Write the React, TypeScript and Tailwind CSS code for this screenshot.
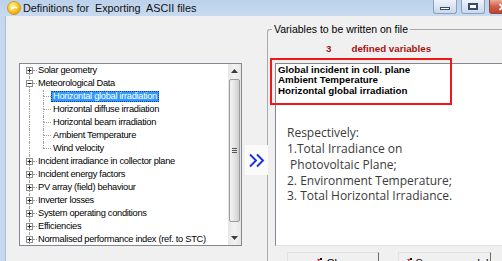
const LINE = "border-dotted border-[#a0a0a0]";
const TREE_FONT = "font-['Liberation_Sans',sans-serif] tracking-[-0.3px]";

type Row = { label: string; kind: "plus" | "minus" | "leaf"; selected?: boolean; lastChild?: boolean };

const rows: Row[] = [
  { label: "Solar geometry", kind: "plus" },
  { label: "Meteorological Data", kind: "minus" },
  { label: "Horizontal global irradiation", kind: "leaf", selected: true },
  { label: "Horizontal diffuse irradiation", kind: "leaf" },
  { label: "Horizontal beam irradiation", kind: "leaf" },
  { label: "Ambient Temperature", kind: "leaf" },
  { label: "Wind velocity", kind: "leaf", lastChild: true },
  { label: "Incident irradiance in collector plane", kind: "plus" },
  { label: "Incident energy factors", kind: "plus" },
  { label: "PV array (field) behaviour", kind: "plus" },
  { label: "Inverter losses", kind: "plus" },
  { label: "System operating conditions", kind: "plus" },
  { label: "Efficiencies", kind: "plus" },
  { label: "Normalised performance index (ref. to STC)", kind: "plus" },
];

const chosen = ["Global incident in coll. plane", "Ambient Temperature", "Horizontal global irradiation"];

const note = ["Respectively:", "1.Total Irradiance on", " Photovoltaic Plane;", "2. Environment Temperature;", "3. Total Horizontal Irradiance."];

function Expander({ open }: { open: boolean }) {
  return (
    <svg width="7" height="7" viewBox="0 0 7 7" className="block shrink-0">
      <rect x="0.5" y="0.5" width="6" height="6" fill="#fff" stroke="#8e8f8f" />
      <path d="M1.5 3.5h4" stroke="#222" />
      {!open && <path d="M3.5 1.5v4" stroke="#222" />}
    </svg>
  );
}

function TreeRow({ row, first }: { row: Row; first: boolean }) {
  const leaf = row.kind === "leaf";
  return (
    <div className="flex h-[13px] items-stretch">
      <div className="grid w-[18px] shrink-0">
        <div className="col-start-1 row-start-1 flex flex-col">
          <div className={`ml-[9px] h-[6px] ${first ? "" : `border-l ${LINE}`}`} />
          <div className={`ml-[9px] flex-1 border-l ${LINE}`} />
        </div>
        {!leaf && (
          <div className="col-start-1 row-start-1 flex items-center">
            <span className="ml-[6px]">
              <Expander open={row.kind === "minus"} />
            </span>
            <span className={`w-[4px] border-t ${LINE}`} />
          </div>
        )}
      </div>
      {leaf && (
        <div className="grid w-[13px] shrink-0">
          <div className="col-start-1 row-start-1 flex flex-col">
            <div className={`ml-[5px] h-[6px] border-l ${LINE}`} />
            <div className={`ml-[5px] flex-1 ${row.lastChild ? "" : `border-l ${LINE}`}`} />
          </div>
          <div className="col-start-1 row-start-1 flex items-center">
            <span className={`ml-[5px] w-[8px] border-t ${LINE}`} />
          </div>
        </div>
      )}
      <span
        className={`self-center whitespace-nowrap text-[9.3px] leading-[11px] ${
          leaf ? "px-[2px]" : ""
        } ${row.selected ? "bg-[#3399ff] text-white outline outline-dotted outline-[#0f3f8c] -outline-offset-1" : "text-black"}`}
      >
        {row.label}
      </span>
    </div>
  );
}

function Arrow({ up }: { up?: boolean }) {
  return (
    <svg width="7" height="4" viewBox="0 0 7 4" className="block">
      <path d={up ? "M0 4h7L3.5 0z" : "M0 0h7L3.5 4z"} fill="#3c3c3c" />
    </svg>
  );
}

function ScrollBar() {
  return (
    <div className="flex w-[13px] shrink-0 flex-col bg-linear-to-r from-[#e6e6e6] via-[#f2f2f2] to-[#e6e6e6]">
      <div className="flex h-[14px] shrink-0 items-center justify-center">
        <Arrow up />
      </div>
      <div className="mx-[1px] mt-[1px] flex h-[143px] shrink-0 flex-col items-center justify-center gap-[1px] rounded-[2px] border border-[#9b9b9b] bg-linear-to-r from-[#f4f4f4] via-[#e4e4e4] to-[#cfcfcf]">
        <span className="h-px w-[5px] bg-[#555]" />
        <span className="h-px w-[5px] bg-[#555]" />
        <span className="h-px w-[5px] bg-[#555]" />
      </div>
      <div className="flex-1" />
      <div className="flex h-[14px] shrink-0 items-center justify-center">
        <Arrow />
      </div>
    </div>
  );
}

function AppIcon() {
  return (
    <svg width="14" height="14" viewBox="0 0 14 14" className="block">
      <defs>
        <radialGradient id="sun" cx="0.4" cy="0.35" r="0.7">
          <stop offset="0" stopColor="#fff3a6" />
          <stop offset="0.6" stopColor="#f7c623" />
          <stop offset="1" stopColor="#e49a0c" />
        </radialGradient>
      </defs>
      <circle cx="7" cy="7" r="6.5" fill="url(#sun)" stroke="#d48a10" strokeWidth="0.8" />
      <path d="M4 8.5c1-2.5 4-3 6-1.5M5 6l1.5 2" stroke="#fff" strokeWidth="1.1" fill="none" />
    </svg>
  );
}

function CapButton({ kind }: { kind: "min" | "max" | "close" }) {
  if (kind === "close") {
    return (
      <div className="-mr-[14px] flex h-[14px] w-[27px] shrink-0 items-center justify-center rounded-b-[3px] border border-t-0 border-[#8d4a42] bg-linear-to-b from-[#e9a99a] via-[#d25c4a] to-[#c2402d]">
        <svg width="9" height="8" viewBox="0 0 9 8" className="block">
          <path d="M1.5 1l6 6M7.5 1l-6 6" stroke="#fff" strokeWidth="1.8" />
        </svg>
      </div>
    );
  }
  return (
    <div className="flex h-[14px] w-[24px] shrink-0 items-center justify-center rounded-b-[3px] border border-t-0 border-[#8ba0bb] bg-linear-to-b from-[#eef3fa] to-[#c9d8ea]">
      {kind === "min" ? (
        <span className="mt-[3px] h-[3px] w-[10px] border border-[#3a4c6b] bg-white" />
      ) : (
        <span className="h-[7px] w-[10px] border border-[#3a4c6b] bg-white shadow-[inset_0_0_0_1px_#3a4c6b]" />
      )}
    </div>
  );
}

function ButtonIcon() {
  return (
    <svg width="12" height="12" viewBox="0 0 12 12" className="mt-[2px] block shrink-0">
      <path d="M1 4h6v7H1z" fill="#2c4fd6" />
      <path d="M6 1l3 0-1 3z" fill="#e0262a" />
      <rect x="9" y="0" width="2" height="2" fill="#111" />
    </svg>
  );
}

function WinButton({ label, w }: { label: string; w: string }) {
  return (
    <div
      className={`${w} flex h-[24px] shrink-0 justify-center gap-[3px] border-l border-t border-r border-l-[#e2e2e2] border-t-[#e2e2e2] border-r-[#6a6a6a] bg-[#f0f0f0] pt-[3px]`}
    >
      <ButtonIcon />
      <span className="mt-[1px] text-[11px] leading-[13px] text-black">{label}</span>
    </div>
  );
}

export default function App() {
  return (
    <div className="relative h-[261px] w-[502px] overflow-hidden bg-[#f0f0f0] font-['Liberation_Sans',sans-serif]">
      {/* title bar */}
      <div className="flex h-[16px] items-center bg-linear-to-b from-[#bcd1ea] to-[#c7daf0]">
        <span className="ml-[7px]">
          <AppIcon />
        </span>
        <span className="ml-[2px] whitespace-pre text-[10.8px] leading-[14px] text-[#111]">
          {"Definitions for  Exporting  ASCII files"}
        </span>
        <div className="ml-auto flex gap-[4px] self-start">
          <CapButton kind="min" />
          <CapButton kind="max" />
          <CapButton kind="close" />
        </div>
      </div>

      <div className="flex h-[245px]">
        <div className="w-[6px] shrink-0 border-r border-[#aabed8] bg-[#c5d8ef]" />

        {/* left: variable tree */}
        <div className="ml-[13px] mt-[47px] flex h-[183px] w-[223px] shrink-0 border border-[#828790] bg-white">
          <div className={`flex-1 overflow-hidden ${TREE_FONT}`}>
            {rows.map((r, i) => (
              <TreeRow key={r.label} row={r} first={i === 0} />
            ))}
          </div>
          <ScrollBar />
        </div>

        {/* transfer arrow */}
        <div className="w-[25px] shrink-0">
          <div className="relative z-10 ml-[3px] mt-[129px] flex h-[30px] w-[23px] items-center bg-[#fbfbfb]">
            <svg width="18" height="15" viewBox="0 0 18 15" className="ml-[3px] block">
              <path d="M2 1.5l6 6-6 6M9 1.5l6 6-6 6" stroke="#1b2fe3" strokeWidth="1.9" fill="none" />
            </svg>
          </div>
        </div>

        {/* right: group box */}
        <div className="mt-[13px] flex min-h-0 flex-1 flex-col rounded-tl-[3px] border-l border-t border-[#a9a9a9]">
          <span className="-mt-[7px] ml-[4px] h-[12px] w-fit shrink-0 bg-[#f0f0f0] px-[2px] text-[10.5px] leading-[12px] text-black">
            Variables to be written on file
          </span>
          <div className="mt-[8px] flex h-[12px] shrink-0 items-center pl-[58px] text-[9.75px] font-bold leading-[12px] text-[#a8120f]">
            <span>3</span>
            <span className="ml-[20px]">defined variables</span>
          </div>
          <div className="ml-[7px] mt-[8px] h-[183px] shrink-0 border-b border-l border-t border-b-[#e0e0e0] border-l-[#828790] border-t-[#828790] bg-white pl-[2px] pt-[1px]">
            {chosen.map((c) => (
              <div key={c} className="text-[9.75px] font-bold leading-[10.3px] text-black">
                {c}
              </div>
            ))}
            <div className="ml-[9px] mt-[29.5px] font-['Open_Sans','Liberation_Sans',sans-serif] text-[12px] leading-[15.7px] text-[#3a3a3a]">
              {note.map((n) => (
                <div key={n} className="whitespace-pre">
                  {n}
                </div>
              ))}
            </div>
          </div>
          <div className="ml-[19px] mt-[6px] flex shrink-0 gap-[19px]">
            <WinButton label="Close" w="w-[92px]" />
            <WinButton label="Save as model" w="w-[93px]" />
          </div>
        </div>
      </div>

      {/* annotation frame drawn over the list */}
      <div className="absolute left-[270px] top-[58px] h-[47px] w-[182px] border-2 border-[#ee1818]" />
    </div>
  );
}
